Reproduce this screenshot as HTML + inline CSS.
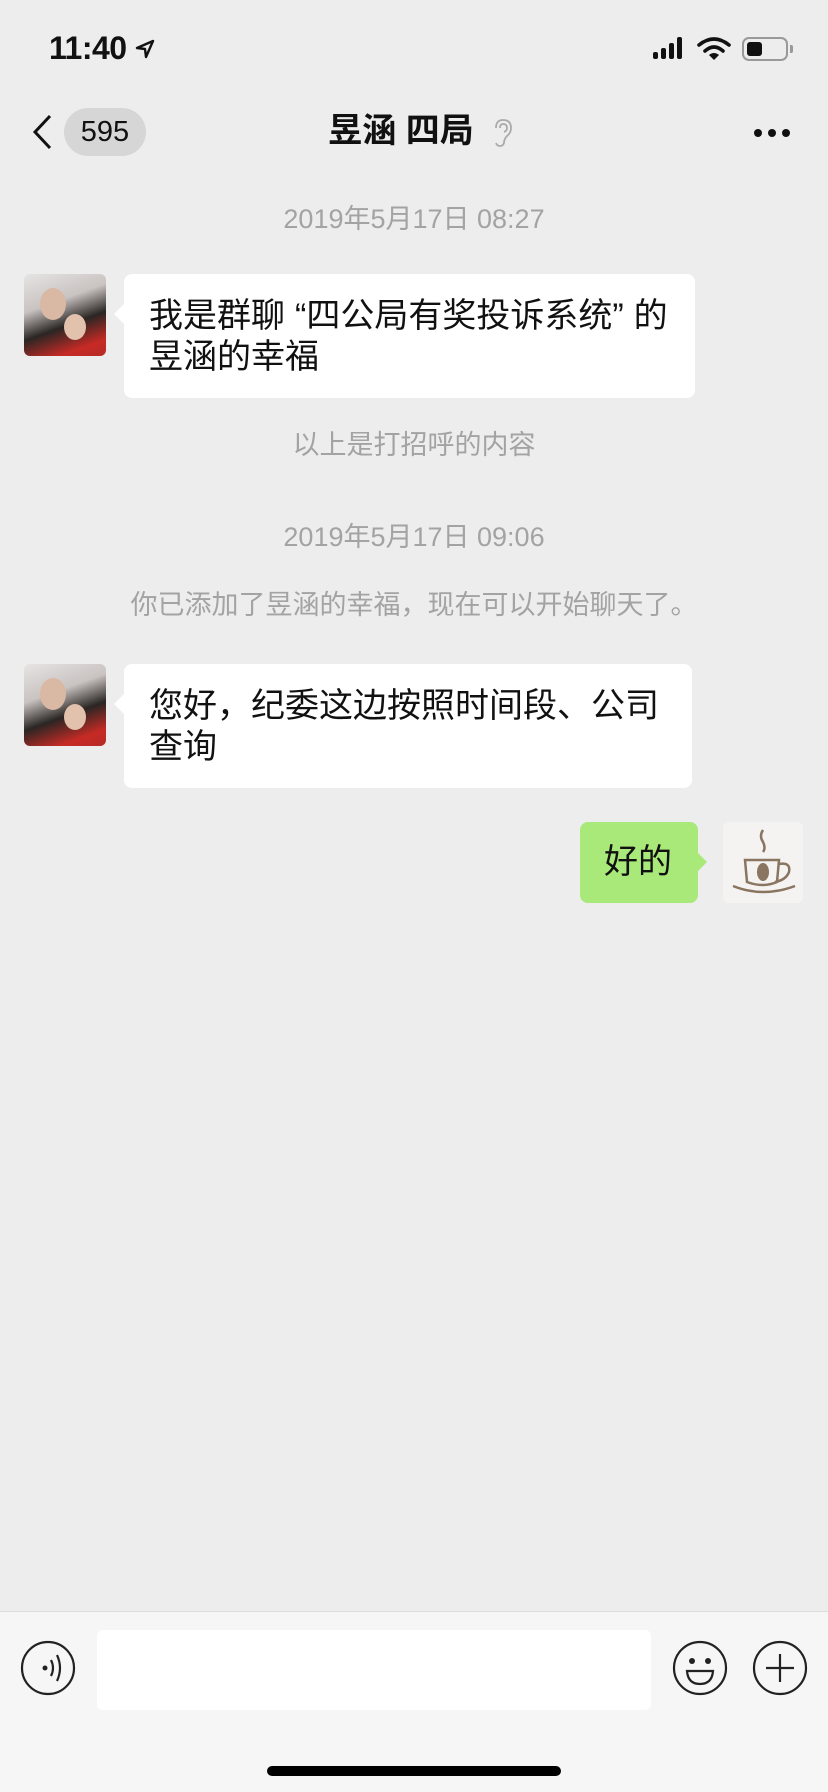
<!DOCTYPE html>
<html><head><meta charset="utf-8"><style>
*{margin:0;padding:0;box-sizing:border-box}
body{width:828px;height:1792px;background:#ededed;font-family:"Liberation Sans","Noto Sans CJK SC",sans-serif;position:relative;overflow:hidden;color:#111}
.a{position:absolute}
.sys{position:absolute;left:0;width:828px;text-align:center;color:#a3a3a3;font-size:27px;line-height:32px}
.bub{position:absolute;background:#fff;border-radius:8px;font-size:34px;line-height:41px;padding:0 0 0 25px}
.bub:before{content:"";position:absolute;left:-10px;top:30px;border:10px solid transparent;border-left:0;border-right-color:#fff}
.av{position:absolute;width:82px;height:82px;border-radius:6px;overflow:hidden;background:linear-gradient(160deg,#e6e4e4 0%,#c9c3c1 35%,#2a2624 60%,#c72a25 85%,#b52a26 100%)}
.av:before{content:"";position:absolute;left:16px;top:14px;width:26px;height:32px;border-radius:50%;background:#d9b8a4}
.av:after{content:"";position:absolute;left:40px;top:40px;width:22px;height:26px;border-radius:50%;background:#e2c1ad}
</style></head><body>
<div class="a" style="left:49px;top:30px;font-size:32px;font-weight:bold;letter-spacing:-0.5px">11:40</div>
<svg class="a" style="left:134px;top:38px" width="22" height="22" viewBox="0 0 22 22"><path d="M19 3 L3 10 L11 11 L12 19 Z" fill="none" stroke="#111" stroke-width="2.4" stroke-linejoin="round"/></svg>
<svg class="a" style="left:652px;top:35px" width="36" height="26" viewBox="0 0 36 26"><g fill="#111"><rect x="1" y="17" width="5" height="7" rx="2"/><rect x="9" y="13" width="5" height="11" rx="2"/><rect x="17" y="8" width="5" height="16" rx="2"/><rect x="25" y="2" width="5" height="22" rx="2"/></g></svg>
<svg class="a" style="left:696px;top:36px" width="36" height="26" viewBox="0 0 36 26"><g fill="none" stroke="#111" stroke-width="3.6" stroke-linecap="round"><path d="M3 9 Q18 -3 33 9"/><path d="M9 15 Q18 7 27 15"/></g><path d="M13 19 L18 24 L23 19 Q18 15 13 19Z" fill="#111"/></svg>
<div class="a" style="left:742px;top:37px;width:46px;height:24px;border:2px solid #999;border-radius:7px"><div style="position:absolute;left:3px;top:3px;width:15px;height:14px;background:#111;border-radius:3px"></div></div>
<div class="a" style="left:790px;top:45px;width:3px;height:8px;background:#999;border-radius:0 2px 2px 0"></div>

<svg class="a" style="left:30px;top:114px" width="24" height="36" viewBox="0 0 24 36"><path d="M20 2 L5 18 L20 34" fill="none" stroke="#111" stroke-width="3"/></svg>
<div class="a" style="left:64px;top:108px;width:82px;height:48px;border-radius:24px;background:#d6d6d6;text-align:center;line-height:48px;font-size:29px">595</div>
<div class="a" style="left:0;width:828px;top:109px;text-align:center;font-size:34px;font-weight:bold;line-height:44px">昱涵 四局<span style="display:inline-block;width:26px"></span></div>
<svg class="a" style="left:492px;top:118px" width="22" height="30" viewBox="0 0 22 30"><path d="M4 10 Q4 2 11 2 Q19 2 19 10 Q19 15 15 18 Q12 21 12 25 Q11 28 8 28 Q5 28 4 25 M8 10 Q8 6 11 6 Q15 6 15 10 Q15 13 12 14" fill="none" stroke="#aaa" stroke-width="1.8"/></svg>
<div class="a" style="left:754px;top:129px;width:8px;height:8px;border-radius:4px;background:#111;box-shadow:14px 0 #111,28px 0 #111"></div>

<div class="sys" style="top:203px">2019年5月17日 08:27</div>
<div class="av" style="left:24px;top:274px"></div>
<div class="bub" style="left:124px;top:274px;width:571px;height:124px;padding-top:22px">我是群聊<span style="padding-left:10px">“</span>四公局有奖投诉系统<span style="padding-right:10px">”</span>的<br>昱涵的幸福</div>
<div class="sys" style="top:429px">以上是打招呼的内容</div>
<div class="sys" style="top:521px">2019年5月17日 09:06</div>
<div class="sys" style="top:589px">你已添加了昱涵的幸福，现在可以开始聊天了。</div>
<div class="av" style="left:24px;top:664px"></div>
<div class="bub" style="left:124px;top:664px;width:568px;height:124px;padding-top:22px">您好，纪委这边按照时间段、公司<br>查询</div>
<div class="a" style="left:580px;top:822px;width:118px;height:81px;background:#a9e97a;border-radius:8px;font-size:34px;line-height:81px;padding-left:24px">好的</div>
<div class="a" style="left:697px;top:852px;border:10px solid transparent;border-right:0;border-left-color:#a9e97a"></div>
<div class="a" style="left:723px;top:822px;width:80px;height:81px;background:#f4f3f2;border-radius:6px"></div>
<svg class="a" style="left:723px;top:822px" width="80" height="81" viewBox="0 0 80 81"><g fill="none" stroke="#8a7560" stroke-width="2.5"><path d="M40 8 Q36 14 40 20 Q43 26 40 30"/><path d="M22 38 L24 60 Q40 66 54 60 L56 38 Z"/><path d="M56 42 Q68 40 66 50 Q63 58 52 60"/><path d="M10 64 Q40 76 72 64"/></g><ellipse cx="40" cy="50" rx="6" ry="9" fill="#8a7560"/></svg>

<div class="a" style="left:0;top:1611px;width:828px;height:181px;background:#f6f6f6;border-top:1px solid #dcdcdc"></div>
<div class="a" style="left:97px;top:1630px;width:554px;height:80px;background:#fff;border-radius:6px"></div>
<svg class="a" style="left:20px;top:1640px" width="56" height="56" viewBox="0 0 56 56"><g fill="none" stroke="#222" stroke-width="2.2"><circle cx="28" cy="28" r="26"/><path d="M31 20 Q35 28 31 36"/><path d="M37 15 Q43 28 37 41"/></g><circle cx="25" cy="28" r="2.5" fill="#222"/></svg>
<svg class="a" style="left:672px;top:1640px" width="56" height="56" viewBox="0 0 56 56"><g fill="none" stroke="#222" stroke-width="2.2"><circle cx="28" cy="28" r="26"/><path d="M15 31 H41 Q40 44 28 44 Q16 44 15 31Z"/></g><circle cx="20" cy="21" r="3" fill="#222"/><circle cx="36" cy="21" r="3" fill="#222"/></svg>
<svg class="a" style="left:752px;top:1640px" width="56" height="56" viewBox="0 0 56 56"><g fill="none" stroke="#222" stroke-width="2.2"><circle cx="28" cy="28" r="26"/><path d="M28 14 V42 M14 28 H42"/></g></svg>
<div class="a" style="left:267px;top:1766px;width:294px;height:10px;border-radius:5px;background:#000"></div>
</body></html>
